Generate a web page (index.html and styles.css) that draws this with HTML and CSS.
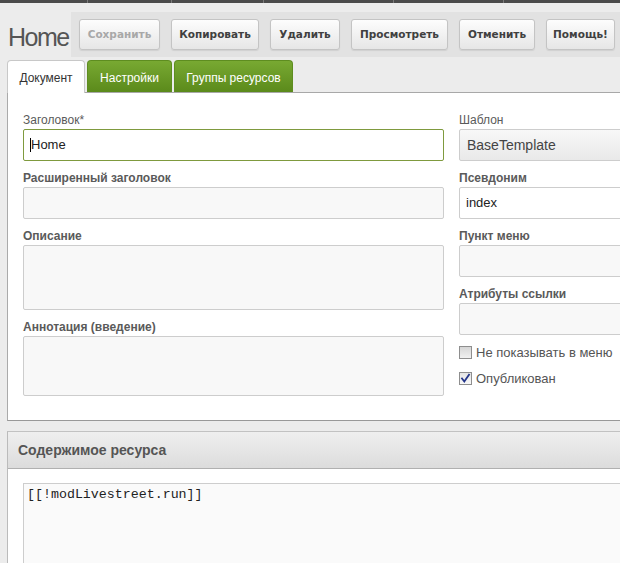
FILE: index.html
```html
<!DOCTYPE html>
<html lang="ru">
<head>
<meta charset="utf-8">
<title>Home</title>
<link rel="stylesheet" href="styles.css">
</head>
<body>
<div class="topbar">
  <span class="seg seg-a"></span><span class="seg seg-b"></span><span class="seg seg-c"></span><span class="seg seg-d"></span><span class="seg seg-e"></span><span class="seg seg-f"></span>
</div>
<div class="page">
  <div class="header">
    <h1 class="title">Home</h1>
    <div class="toolbar">
      <button class="btn btn-disabled w-save">Сохранить</button>
      <button class="btn w-copy">Копировать</button>
      <button class="btn w-del">Удалить</button>
      <button class="btn w-view">Просмотреть</button>
      <button class="btn w-cancel">Отменить</button>
      <button class="btn w-help">Помощь!</button>
    </div>
  </div>

  <div class="tabs">
    <div class="tab tab-active w-doc">Документ</div>
    <div class="tab tab-green w-settings">Настройки</div>
    <div class="tab tab-green w-groups">Группы ресурсов</div>
  </div>

  <div class="panel main-panel">
    <div class="col col-left">
      <div class="field">
        <label class="lbl lbl-normal">Заголовок*</label>
        <div class="input input-focus"><span class="caret"></span>Home</div>
      </div>
      <div class="field">
        <label class="lbl">Расширенный заголовок</label>
        <div class="input"></div>
      </div>
      <div class="field">
        <label class="lbl">Описание</label>
        <div class="input area-desc"></div>
      </div>
      <div class="field last">
        <label class="lbl">Аннотация (введение)</label>
        <div class="input area-intro"></div>
      </div>
    </div>
    <div class="col col-right">
      <div class="field">
        <label class="lbl lbl-normal">Шаблон</label>
        <div class="input select">BaseTemplate</div>
      </div>
      <div class="field">
        <label class="lbl">Псевдоним</label>
        <div class="input input-white">index</div>
      </div>
      <div class="field">
        <label class="lbl">Пункт меню</label>
        <div class="input"></div>
      </div>
      <div class="field last">
        <label class="lbl">Атрибуты ссылки</label>
        <div class="input"></div>
      </div>
      <div class="checks">
        <div class="check-row">
          <span class="cb"></span>
          <span class="check-label">Не показывать в меню</span>
        </div>
        <div class="check-row">
          <span class="cb cb-checked"><svg width="11" height="11" viewBox="0 0 11 11"><path d="M2 5.5 L4.3 8.5 L9 1.8" fill="none" stroke="#23358a" stroke-width="1.8" stroke-linecap="square"/></svg></span>
          <span class="check-label">Опубликован</span>
        </div>
      </div>
    </div>
  </div>

  <div class="panel content-panel">
    <div class="panel-head">Содержимое ресурса</div>
    <div class="panel-body">
      <div class="code">[[!modLivestreet.run]]</div>
    </div>
  </div>
</div>
</body>
</html>
```
FILE: styles.css
```css
html, body {
  margin: 0;
  padding: 0;
}
body {
  width: 620px;
  height: 563px;
  overflow: hidden;
  background: #ececec;
  font-family: "Liberation Sans", Arial, sans-serif;
  color: #555;
}

/* top dark strip */
.topbar {
  display: flex;
  height: 3px;
  background: #4b4b4b;
}
.seg {
  height: 3px;
  border-right: 1px solid #7a7a7a;
  box-sizing: border-box;
}
.seg-a { width: 88px; }
.seg-b { width: 84px; }
.seg-c { width: 92px; }
.seg-d { width: 130px; }
.seg-e { width: 110px; }
.seg-f { flex: 1; border-right: 0; }

.page {
  margin-left: 7px;
  width: 660px;
}

/* header */
.header {
  display: flex;
  align-items: flex-start;
  padding-top: 9px;
}
.title {
  flex: 0 0 63px;
  margin: 10px 0 0 1px;
  font-size: 25px;
  line-height: 30px;
  font-weight: normal;
  letter-spacing: -1.5px;
  color: #555;
}
.toolbar {
  flex: 1;
  display: flex;
  gap: 11px;
  padding: 7px 8px;
  background: #e2e2e2;
}
.btn {
  box-sizing: border-box;
  height: 31px;
  padding: 0;
  border: 1px solid #c4c4c4;
  border-radius: 3px;
  background: linear-gradient(#fdfdfd, #e6e6e6);
  box-shadow: 0 1px 1px rgba(0,0,0,0.08);
  font-family: "DejaVu Sans", Verdana, sans-serif;
  font-size: 10.5px;
  font-weight: bold;
  color: #404040;
  text-align: center;
  line-height: 29px;
}
.btn-disabled { color: #a8a8a8; }
.w-save { width: 81px; }
.w-copy { width: 88px; }
.w-del { width: 70px; }
.w-view { width: 97px; }
.w-cancel { width: 76px; }
.w-help { width: 69px; }

/* tabs */
.tabs {
  display: flex;
  align-items: flex-start;
  gap: 2px;
  height: 32px;
  margin-top: 3px;
}
.tab {
  box-sizing: border-box;
  height: 32px;
  padding-top: 4px;
  line-height: 27px;
  font-size: 12px;
  text-align: center;
  border: 1px solid #c8c8c8;
  border-bottom: 0;
  border-radius: 4px 4px 0 0;
}
.tab-active {
  position: relative;
  height: 33px;
  background: #fff;
  color: #333;
  z-index: 1;
}
.tab-green {
  background: linear-gradient(#78a932, #5b8a1b);
  border-color: #5e8d20;
  color: #fff;
}
.w-doc { width: 78px; }
.w-settings { width: 85px; }
.w-groups { width: 119px; }

/* panels */
.panel {
  background: #fff;
  border-left: 1px solid #aaa;
}
.main-panel {
  display: flex;
  gap: 15px;
  border-top: 1px solid #a8a8a8;
  border-bottom: 1px solid #999;
  padding: 19px 0 24px 15px;
}
.col-left { width: 421px; }
.col-right { width: 200px; }

.field { margin-bottom: 9px; }
.field.last { margin-bottom: 0; }

.lbl {
  display: block;
  font-size: 12px;
  line-height: 16px;
  font-weight: bold;
  color: #5a5a5a;
  margin-bottom: 1px;
}
.lbl-normal { font-weight: normal; }

.input {
  box-sizing: border-box;
  height: 32px;
  border: 1px solid #cdcdcd;
  border-radius: 2px;
  background: #f8f8f8;
  padding-left: 6px;
  font-size: 13px;
  line-height: 30px;
  color: #222;
}
.input-focus {
  border-color: #7f9a3e;
  background: #fff;
  display: flex;
  align-items: center;
}
.caret {
  width: 1px;
  height: 14px;
  background: #000;
}
.input-white { background: #fff; }
.select {
  background: linear-gradient(#f8f8f8, #e9e9e9);
  padding-left: 7px;
  font-size: 14px;
  color: #444;
}
.area-desc { height: 65px; }
.area-intro { height: 60px; }

.checks {
  display: flex;
  flex-direction: column;
  gap: 13px;
  margin-top: 11px;
}
.check-row {
  display: flex;
  align-items: center;
  gap: 4px;
  height: 13px;
}
.cb {
  box-sizing: border-box;
  width: 13px;
  height: 13px;
  border: 1px solid #8e8e8e;
  background: linear-gradient(#d6d6d6, #f0f0f0);
  display: flex;
  align-items: center;
  justify-content: center;
}
.cb-checked { background: linear-gradient(#e4e4e4, #f8f8f8); }
.check-label {
  font-size: 13px;
  line-height: 13px;
  color: #555;
  white-space: nowrap;
}

.content-panel {
  margin-top: 10px;
  border-top: 1px solid #c2c2c2;
  border-left-color: #bbb;
}
.panel-head {
  height: 36px;
  line-height: 36px;
  padding-left: 10px;
  background: linear-gradient(#efefef, #dcdcdc);
  border-bottom: 1px solid #b0b0b0;
  font-size: 14px;
  font-weight: bold;
  color: #555;
}
.panel-body {
  padding: 14px 0 0 15px;
  height: 100px;
}
.code {
  box-sizing: border-box;
  height: 100px;
  border: 1px solid #cdcdcd;
  background: #fafafa;
  padding: 3px 0 0 3px;
  font-family: "Liberation Mono", "Courier New", monospace;
  font-size: 13.3px;
  line-height: 15px;
  color: #222;
}
```
